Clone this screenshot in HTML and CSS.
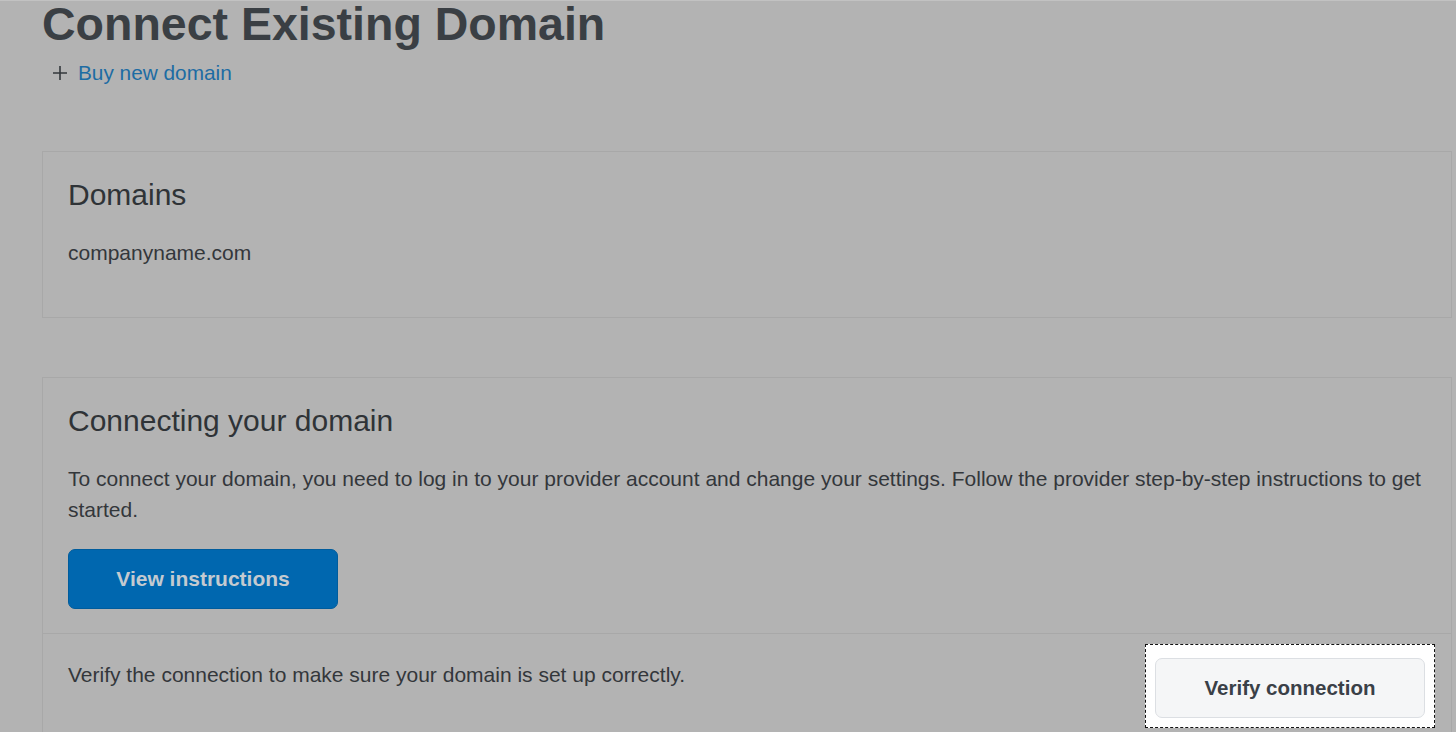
FILE: index.html
```html
<!DOCTYPE html>
<html lang="en">
<head>
  <meta charset="UTF-8">
  <title>Connect Existing Domain</title>
  <link rel="stylesheet" href="styles.css">
</head>
<body>

  <div class="page">
    <h1 class="title">Connect Existing Domain</h1>
    <a class="buy-link" href="#">
      <svg class="plus" width="16" height="16" viewBox="0 0 16 16" aria-hidden="true">
        <path d="M8 1v14M1 8h14" stroke="currentColor" stroke-width="1.6" fill="none"/>
      </svg>
      <span>Buy new domain</span>
    </a>

    <section class="card">
      <div class="card-body">
        <h2 class="card-title">Domains</h2>
        <p class="card-text domain-name">companyname.com</p>
      </div>
    </section>

    <section class="card">
      <div class="card-body">
        <h2 class="card-title">Connecting your domain</h2>
        <p class="card-text">To connect your domain, you need to log in to your provider account and change your settings. Follow the provider step-by-step instructions to get started.</p>
        <button class="btn btn-primary">View instructions</button>
      </div>
      <div class="card-footer">
        <p class="card-text">Verify the connection to make sure your domain is set up correctly.</p>
        <div class="spotlight">
          <button class="btn btn-secondary">Verify connection</button>
        </div>
      </div>
    </section>
  </div>

</body>
</html>
```

FILE: styles.css
```css
body {
  margin: 0;
  padding: 0;
  background: #b3b3b3;
  font-family: "Liberation Sans", Arial, sans-serif;
  color: #33373b;
  overflow: hidden;
  border-top: 1px solid #c2c2c2;
}

.page {
  padding: 0 4px 0 42px;
}

.title {
  margin: 0;
  padding-top: 3px;
  font-size: 46.5px;
  line-height: 40px;
  font-weight: 700;
  color: #3a3f44;
}

.buy-link {
  display: inline-flex;
  align-items: center;
  gap: 10px;
  margin: 13px 0 0 10px;
  font-size: 20.8px;
  line-height: 1.5;
  color: #1d6ca3;
  text-decoration: none;
}

.plus {
  color: #34383c;
}

.card {
  margin-top: 63px;
  border: 1px solid #a8a8a8;
}

.card + .card {
  margin-top: 59px;
}

.card-body {
  padding: 25px 25px 24px;
}

.card-title {
  margin: 0;
  font-size: 30px;
  line-height: 1.2;
  font-weight: 400;
  color: #2f3337;
}

.card-text {
  margin: 0;
  font-size: 21px;
  line-height: 1.5;
  color: #33373b;
}

.card-body .card-text {
  margin-top: 24px;
}

.card-body .domain-name {
  margin-bottom: 24px;
}

.btn {
  font-family: "Liberation Sans", Arial, sans-serif;
  font-size: 20.5px;
  font-weight: 700;
  border-radius: 7px;
  cursor: pointer;
}

.btn-primary {
  margin-top: 23px;
  width: 270px;
  height: 60px;
  font-size: 21px;
  background: #0067af;
  border: 1px solid #005c9c;
  color: #c4cad0;
}

.card-footer {
  display: flex;
  justify-content: space-between;
  align-items: flex-start;
  border-top: 1px solid #a8a8a8;
  padding: 25px 16px 40px 25px;
}

.spotlight {
  margin-top: -15px;
  padding: 13px 9px 9px;
  background: #fff;
  border: 1px dashed #111;
}

.btn-secondary {
  width: 270px;
  height: 60px;
  background: #f5f6f7;
  border: 1px solid #dcdfe3;
  color: #3a4047;
}
```
